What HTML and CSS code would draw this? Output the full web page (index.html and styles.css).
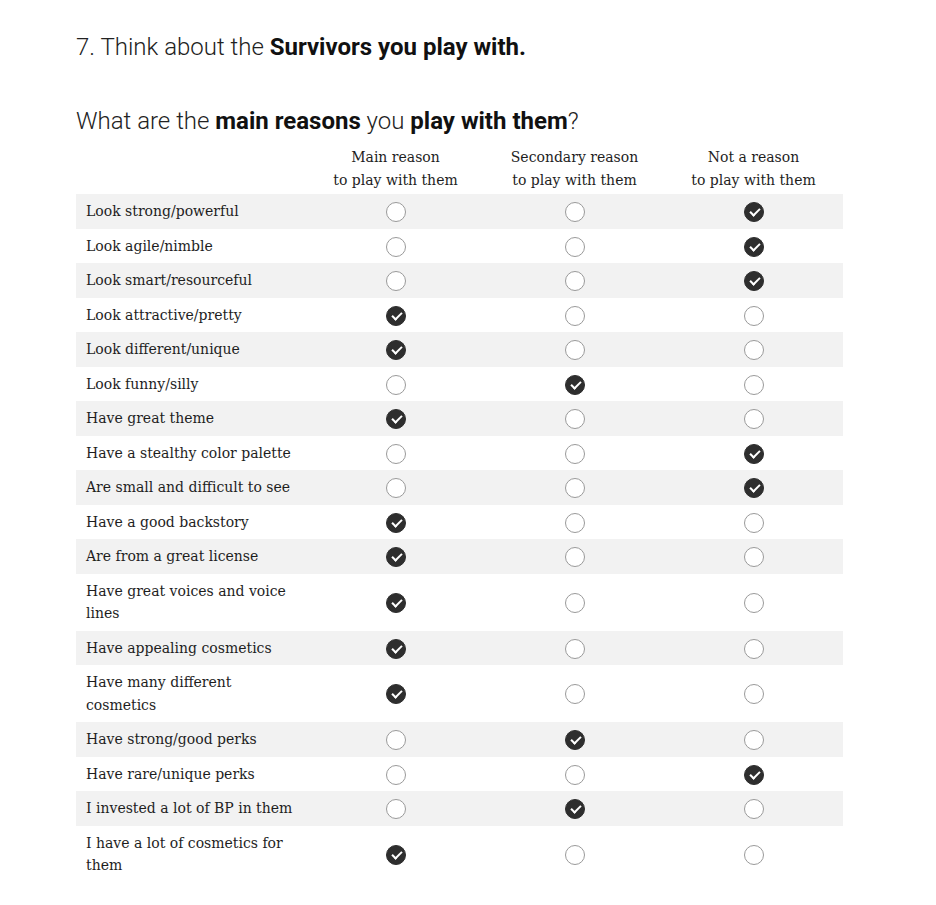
FILE: index.html
```html
<!DOCTYPE html>
<html>
<head>
<meta charset="utf-8">
<link rel="stylesheet" href="styles.css">
</head>
<body>
<div class="page">
  <h1 class="title">7. Think about the <b>Survivors you play with.</b></h1>
  <h2 class="question">What are the <b>main reasons</b> you <b>play with them</b>?</h2>
  <table class="grid">
    <thead>
      <tr>
        <th class="label-col"></th>
        <th>Main reason<br>to play with them</th>
        <th>Secondary reason<br>to play with them</th>
        <th>Not a reason<br>to play with them</th>
      </tr>
    </thead>
    <tbody id="rows">
      <tr class="alt"><td class="label">Look strong/powerful</td><td><span class="r"></span></td><td><span class="r"></span></td><td><span class="r on"></span></td></tr>
      <tr><td class="label">Look agile/nimble</td><td><span class="r"></span></td><td><span class="r"></span></td><td><span class="r on"></span></td></tr>
      <tr class="alt"><td class="label">Look smart/resourceful</td><td><span class="r"></span></td><td><span class="r"></span></td><td><span class="r on"></span></td></tr>
      <tr><td class="label">Look attractive/pretty</td><td><span class="r on"></span></td><td><span class="r"></span></td><td><span class="r"></span></td></tr>
      <tr class="alt"><td class="label">Look different/unique</td><td><span class="r on"></span></td><td><span class="r"></span></td><td><span class="r"></span></td></tr>
      <tr><td class="label">Look funny/silly</td><td><span class="r"></span></td><td><span class="r on"></span></td><td><span class="r"></span></td></tr>
      <tr class="alt"><td class="label">Have great theme</td><td><span class="r on"></span></td><td><span class="r"></span></td><td><span class="r"></span></td></tr>
      <tr><td class="label">Have a stealthy color palette</td><td><span class="r"></span></td><td><span class="r"></span></td><td><span class="r on"></span></td></tr>
      <tr class="alt"><td class="label">Are small and difficult to see</td><td><span class="r"></span></td><td><span class="r"></span></td><td><span class="r on"></span></td></tr>
      <tr><td class="label">Have a good backstory</td><td><span class="r on"></span></td><td><span class="r"></span></td><td><span class="r"></span></td></tr>
      <tr class="alt"><td class="label">Are from a great license</td><td><span class="r on"></span></td><td><span class="r"></span></td><td><span class="r"></span></td></tr>
      <tr><td class="label">Have great voices and voice lines</td><td><span class="r on"></span></td><td><span class="r"></span></td><td><span class="r"></span></td></tr>
      <tr class="alt"><td class="label">Have appealing cosmetics</td><td><span class="r on"></span></td><td><span class="r"></span></td><td><span class="r"></span></td></tr>
      <tr><td class="label">Have many different cosmetics</td><td><span class="r on"></span></td><td><span class="r"></span></td><td><span class="r"></span></td></tr>
      <tr class="alt"><td class="label">Have strong/good perks</td><td><span class="r"></span></td><td><span class="r on"></span></td><td><span class="r"></span></td></tr>
      <tr><td class="label">Have rare/unique perks</td><td><span class="r"></span></td><td><span class="r"></span></td><td><span class="r on"></span></td></tr>
      <tr class="alt"><td class="label">I invested a lot of BP in them</td><td><span class="r"></span></td><td><span class="r on"></span></td><td><span class="r"></span></td></tr>
      <tr><td class="label">I have a lot of cosmetics for them</td><td><span class="r on"></span></td><td><span class="r"></span></td><td><span class="r"></span></td></tr>
    </tbody>
  </table>
</div>
</body>
</html>
```
FILE: styles.css
```css
html, body {
  margin: 0;
  padding: 0;
  background: #fff;
}
.page {
  padding: 31px 0 0 76px;
  width: 767px;
}
.title {
  font-family: Roboto, sans-serif;
  font-weight: 300;
  font-size: 24px;
  line-height: 32px;
  color: #222;
  margin: 0 0 42px 0;
}
.title b, .question b {
  font-weight: 700;
  color: #111;
}
.question {
  font-family: Roboto, sans-serif;
  font-weight: 300;
  font-size: 24px;
  line-height: 32px;
  color: #222;
  margin: 0 0 9px 0;
}
.grid {
  width: 767px;
  border-collapse: collapse;
  font-family: "DejaVu Serif", serif;
  font-size: 14px;
  color: #1e1e1e;
  table-layout: fixed;
}
.grid th {
  font-weight: 400;
  line-height: 23px;
  text-align: center;
  padding: 0 0 2px 0;
  width: 179px;
}
.grid th.label-col {
  width: 230px;
}
.grid td {
  padding: 6px 0;
  line-height: 22.5px;
  text-align: center;
  vertical-align: middle;
}
.grid td.label {
  text-align: left;
  padding-left: 10px;
  padding-right: 10px;
}
.grid tr.alt td {
  background: #f2f2f2;
}
.r {
  display: inline-block;
  width: 18px;
  height: 18px;
  border: 1px solid #9a9a9a;
  border-radius: 50%;
  background: #fff;
  vertical-align: middle;
  box-sizing: content-box;
  position: relative;
}
.r.on {
  background: #2e2e2e;
  border-color: #2e2e2e;
}
.r.on::after {
  content: "";
  position: absolute;
  left: 5px;
  top: 5px;
  width: 8px;
  height: 4px;
  border-left: 2px solid #fff;
  border-bottom: 2px solid #fff;
  transform: rotate(-45deg);
}
```
